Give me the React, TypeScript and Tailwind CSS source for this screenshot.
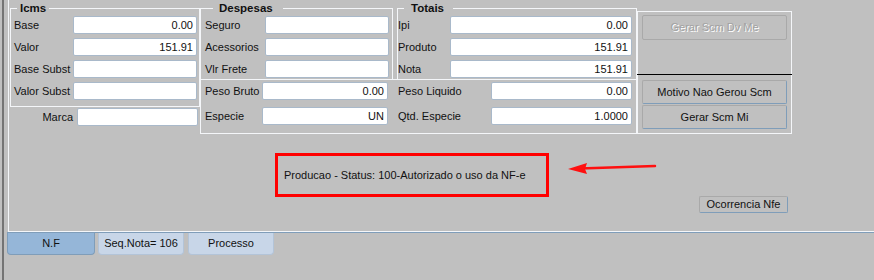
const Field = ({ value = "", w }: { value?: string; w: string }) => (
  <div
    className={`h-[18px] ${w} shrink-0 bg-white border border-[#a9b9ca] rounded-[2px] flex items-center justify-end pr-[3px] text-[#111]`}
  >
    {value}
  </div>
);

const Row = ({
  label,
  lw,
  fw,
  value,
}: {
  label: string;
  lw: string;
  fw: string;
  value?: string;
}) => (
  <div className="flex items-center h-[18px]">
    <span className={`${lw} shrink-0 whitespace-nowrap`}>{label}</span>
    <Field value={value} w={fw} />
  </div>
);

export default function App() {
  return (
    <div className="w-[874px] h-[280px] bg-[#c0c0c0] flex overflow-hidden font-['Liberation_Sans',Arial,sans-serif] text-[11px] text-[#111]">
      <div className="ml-[2px] w-[2px] h-full bg-[#747474]" />
      <div className="ml-[3px] flex-1 flex flex-col">
        {/* main panel */}
        <div className="ml-[1px] h-[232px] border-l border-b border-[#f4f6f9] flex flex-col">
          <div className="flex items-start">
            {/* Icms + Marca */}
            <div className="w-[191px] shrink-0 flex flex-col">
              <fieldset className="ml-[1px] mt-[1px] w-[190px] border border-[#f4f6f9] pl-[3px] pr-[2px] pb-[6px]">
                <legend className="ml-[3px] px-[3px] h-[15px] leading-[15px] font-bold text-[11.5px]">
                  Icms
                </legend>
                <div className="flex flex-col gap-[4px]">
                  <Row label="Base" lw="w-[59px]" fw="w-[124px]" value="0.00" />
                  <Row label="Valor" lw="w-[59px]" fw="w-[124px]" value="151.91" />
                  <Row label="Base Subst" lw="w-[59px]" fw="w-[124px]" />
                  <Row label="Valor Subst" lw="w-[59px]" fw="w-[124px]" />
                </div>
              </fieldset>
              <div className="mt-[1px] flex items-center h-[18px]">
                <span className="w-[64px] text-right">Marca</span>
                <div className="ml-[4px]">
                  <Field w="w-[121px]" />
                </div>
              </div>
            </div>

            {/* Despesas / Totais / Peso */}
            <div className="w-[437px] shrink-0 flex flex-col">
              <div className="flex items-start">
                <fieldset className="mt-[1px] w-[193px] border border-b-0 border-[#f4f6f9] pl-[4px] pr-[3px] pb-[1px]">
                  <legend className="ml-[8px] pl-[6px] pr-[10px] h-[15px] leading-[15px] font-bold text-[11.5px]">
                    Despesas
                  </legend>
                  <div className="flex flex-col gap-[4px]">
                    <Row label="Seguro" lw="w-[60px]" fw="w-[124px]" />
                    <Row label="Acessorios" lw="w-[60px]" fw="w-[124px]" />
                    <Row label="Vlr Frete" lw="w-[60px]" fw="w-[124px]" />
                  </div>
                </fieldset>
                <fieldset className="ml-[4px] mt-[1px] w-[240px] border border-b-0 border-[#f4f6f9] pr-[4px] pb-[1px]">
                  <legend className="ml-[6px] pl-[7px] pr-[9px] h-[15px] leading-[15px] font-bold text-[11.5px]">
                    Totais
                  </legend>
                  <div className="flex flex-col gap-[4px]">
                    <Row label="Ipi" lw="w-[52px]" fw="w-[182px]" value="0.00" />
                    <Row label="Produto" lw="w-[52px]" fw="w-[182px]" value="151.91" />
                    <Row label="Nota" lw="w-[52px]" fw="w-[182px]" value="151.91" />
                  </div>
                </fieldset>
              </div>
              <div className="h-[55px] border border-[#f4f6f9] pl-[4px] pt-[2px] flex flex-col gap-[7px]">
                <div className="flex items-center">
                  <Row label="Peso Bruto" lw="w-[57px]" fw="w-[126px]" value="0.00" />
                  <div className="ml-[10px]">
                    <Row label="Peso Liquido" lw="w-[93px]" fw="w-[141px]" value="0.00" />
                  </div>
                </div>
                <div className="flex items-center">
                  <Row label="Especie" lw="w-[57px]" fw="w-[126px]" value="UN" />
                  <div className="ml-[10px]">
                    <Row label="Qtd. Especie" lw="w-[93px]" fw="w-[141px]" value="1.0000" />
                  </div>
                </div>
              </div>
            </div>

            {/* buttons */}
            <div className="mt-[11px] w-[155px] h-[123px] shrink-0 border border-[#f4f6f9] px-[4px] pt-[3px] flex flex-col">
              <div className="h-[25px] border border-[#a9a9a9] rounded-[2px] flex items-center justify-center text-[#a2a2a2] [text-shadow:1px_1px_0_#ffffff]">
                Gerar Scm Dv Me
              </div>
              <div className="-mx-[5px] mt-[34px] h-[1px] bg-black" />
              <div className="mt-[5px] h-[24px] border border-[#a9a9a9] border-r-[#7f9db9] border-b-[#7f9db9] rounded-[2px] flex items-center justify-center">
                Motivo Nao Gerou Scm
              </div>
              <div className="mt-[1px] h-[24px] border border-[#a9a9a9] border-r-[#7f9db9] border-b-[#7f9db9] rounded-[2px] flex items-center justify-center">
                Gerar Scm Mi
              </div>
            </div>
          </div>

          {/* status */}
          <div className="mt-[19px] flex items-start">
            <div className="ml-[266px] w-[274px] h-[44px] border-[3px] border-[#ff0000] pl-[6px] flex items-center">
              Producao - Status: 100-Autorizado o uso da NF-e
            </div>
            <svg className="ml-[17px] mt-[5px]" width="92" height="20" viewBox="0 0 92 20">
              <line x1="89" y1="8" x2="14" y2="10.5" stroke="#ff1010" strokeWidth="2.5" strokeLinecap="round" />
              <polygon points="2,11 21,5 19,11 21,16" fill="#ff1010" />
            </svg>
          </div>
          <div className="-mt-[1px] ml-[690px] w-[89px] h-[17px] border border-[#a9a9a9] border-r-[#7f9db9] border-b-[#7f9db9] rounded-[2px] flex items-center justify-center">
            Ocorrencia Nfe
          </div>
        </div>
        <div className="h-[1px] bg-[#7f9db9]" />
        {/* tabs */}
        <div className="flex items-start gap-[3px]">
          <div className="w-[88px] h-[22px] bg-[#95b6d8] border border-t-0 border-[#7f9db9] rounded-b-[4px] flex items-center justify-center">
            N.F
          </div>
          <div className="w-[86px] h-[22px] bg-[#c8d6e8] border border-t-0 border-[#b3c4d8] rounded-b-[4px] flex items-center justify-center">
            Seq.Nota= 106
          </div>
          <div className="ml-[1px] w-[86px] h-[22px] bg-[#c8d6e8] border border-t-0 border-[#b3c4d8] rounded-b-[4px] flex items-center justify-center">
            Processo
          </div>
        </div>
      </div>
    </div>
  );
}
